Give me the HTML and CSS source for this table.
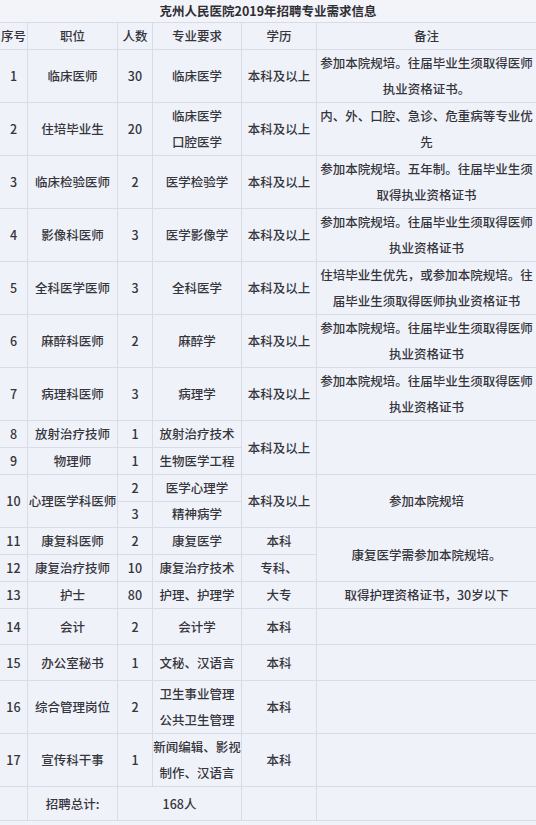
FILE: index.html
```html
<!DOCTYPE html>
<html lang="zh-CN">
<head>
<meta charset="utf-8">
<title>克州人民医院2019年招聘专业需求信息</title>
<link rel="stylesheet" href="styles.css">
</head>
<body>
<div class="page">
<table class="grid">
  <colgroup>
    <col class="c-no"><col class="c-pos"><col class="c-num"><col class="c-major"><col class="c-edu"><col class="c-note">
  </colgroup>
  <tr class="r-title"><td colspan="6" class="title">克州人民医院2019年招聘专业需求信息</td></tr>
  <tr class="r-head">
    <td>序号</td><td>职位</td><td>人数</td><td>专业要求</td><td>学历</td><td>备注</td>
  </tr>
  <tr class="r-big">
    <td>1</td><td>临床医师</td><td>30</td><td>临床医学</td><td>本科及以上</td>
    <td class="two">参加本院规培。往届毕业生须取得医师<br>执业资格证书。</td>
  </tr>
  <tr class="r-big">
    <td>2</td><td>住培毕业生</td><td>20</td><td class="two">临床医学<br>口腔医学</td><td>本科及以上</td>
    <td class="two">内、外、口腔、急诊、危重病等专业优<br>先</td>
  </tr>
  <tr class="r-big">
    <td>3</td><td>临床检验医师</td><td>2</td><td>医学检验学</td><td>本科及以上</td>
    <td class="two">参加本院规培。五年制。往届毕业生须<br>取得执业资格证书</td>
  </tr>
  <tr class="r-big">
    <td>4</td><td>影像科医师</td><td>3</td><td>医学影像学</td><td>本科及以上</td>
    <td class="two">参加本院规培。往届毕业生须取得医师<br>执业资格证书</td>
  </tr>
  <tr class="r-big">
    <td>5</td><td>全科医学医师</td><td>3</td><td>全科医学</td><td>本科及以上</td>
    <td class="two">住培毕业生优先，或参加本院规培。往<br>届毕业生须取得医师执业资格证书</td>
  </tr>
  <tr class="r-big">
    <td>6</td><td>麻醉科医师</td><td>2</td><td>麻醉学</td><td>本科及以上</td>
    <td class="two">参加本院规培。往届毕业生须取得医师<br>执业资格证书</td>
  </tr>
  <tr class="r-big">
    <td>7</td><td>病理科医师</td><td>3</td><td>病理学</td><td>本科及以上</td>
    <td class="two">参加本院规培。往届毕业生须取得医师<br>执业资格证书</td>
  </tr>
  <tr class="r-sm">
    <td>8</td><td>放射治疗技师</td><td>1</td><td>放射治疗技术</td><td rowspan="2">本科及以上</td><td rowspan="2"></td>
  </tr>
  <tr class="r-sm">
    <td>9</td><td>物理师</td><td>1</td><td>生物医学工程</td>
  </tr>
  <tr class="r-half">
    <td rowspan="2">10</td><td rowspan="2">心理医学科医师</td><td>2</td><td>医学心理学</td><td rowspan="2">本科及以上</td><td rowspan="2">参加本院规培</td>
  </tr>
  <tr class="r-half">
    <td>3</td><td>精神病学</td>
  </tr>
  <tr class="r-sm">
    <td>11</td><td>康复科医师</td><td>2</td><td>康复医学</td><td>本科</td><td rowspan="2">康复医学需参加本院规培。</td>
  </tr>
  <tr class="r-sm">
    <td>12</td><td>康复治疗技师</td><td>10</td><td>康复治疗技术</td><td>专科、</td>
  </tr>
  <tr class="r-sm">
    <td>13</td><td>护士</td><td>80</td><td>护理、护理学</td><td>大专</td><td>取得护理资格证书，30岁以下</td>
  </tr>
  <tr class="r-mid">
    <td>14</td><td>会计</td><td>2</td><td>会计学</td><td>本科</td><td></td>
  </tr>
  <tr class="r-mid">
    <td>15</td><td>办公室秘书</td><td>1</td><td>文秘、汉语言</td><td>本科</td><td></td>
  </tr>
  <tr class="r-big">
    <td>16</td><td>综合管理岗位</td><td>2</td><td class="two">卫生事业管理<br>公共卫生管理</td><td>本科</td><td></td>
  </tr>
  <tr class="r-big">
    <td>17</td><td>宣传科干事</td><td>1</td><td class="two">新闻编辑、影视<br>制作、汉语言</td><td>本科</td><td></td>
  </tr>
  <tr class="r-total">
    <td></td><td>招聘总计:</td><td colspan="2">168人</td><td></td><td></td>
  </tr>
</table>
</div>
</body>
</html>
```
FILE: styles.css
```css
html, body {
  margin: 0;
  padding: 0;
  background: #f0f2fa;
}
.page {
  width: 536px;
  height: 825px;
  overflow: hidden;
  background: #f0f2fa;
}
.grid {
  width: 537px;
  margin-left: -1px;
  border-collapse: collapse;
  table-layout: fixed;
  font-family: "Noto Sans CJK SC", "Noto Sans", sans-serif;
  font-size: 12.5px;
  font-weight: 500;
  color: #35353a;
}
.c-no { width: 28px; }
.c-pos { width: 90px; }
.c-num { width: 35px; }
.c-major { width: 89px; }
.c-edu { width: 75px; }
.c-note { width: 220px; }
.grid td {
  border: 1px solid #d9dce7;
  padding: 0;
  text-align: center;
  vertical-align: middle;
  white-space: nowrap;
  overflow: visible;
  line-height: 16px;
}
.grid td.two {
  line-height: 26px;
}
.r-title td {
  height: 22px;
  border-top: none;
  border-left: none;
  border-right: none;
  background: #f3f4f9;
  color: #2e2e33;
  font-weight: 600;
}
.r-head td { height: 26px; }
.r-big td { height: 52px; }
.r-sm td { height: 26px; }
.r-half td { height: 25.5px; }
.r-mid td { height: 35px; }
.r-total td { height: 33px; }
```
